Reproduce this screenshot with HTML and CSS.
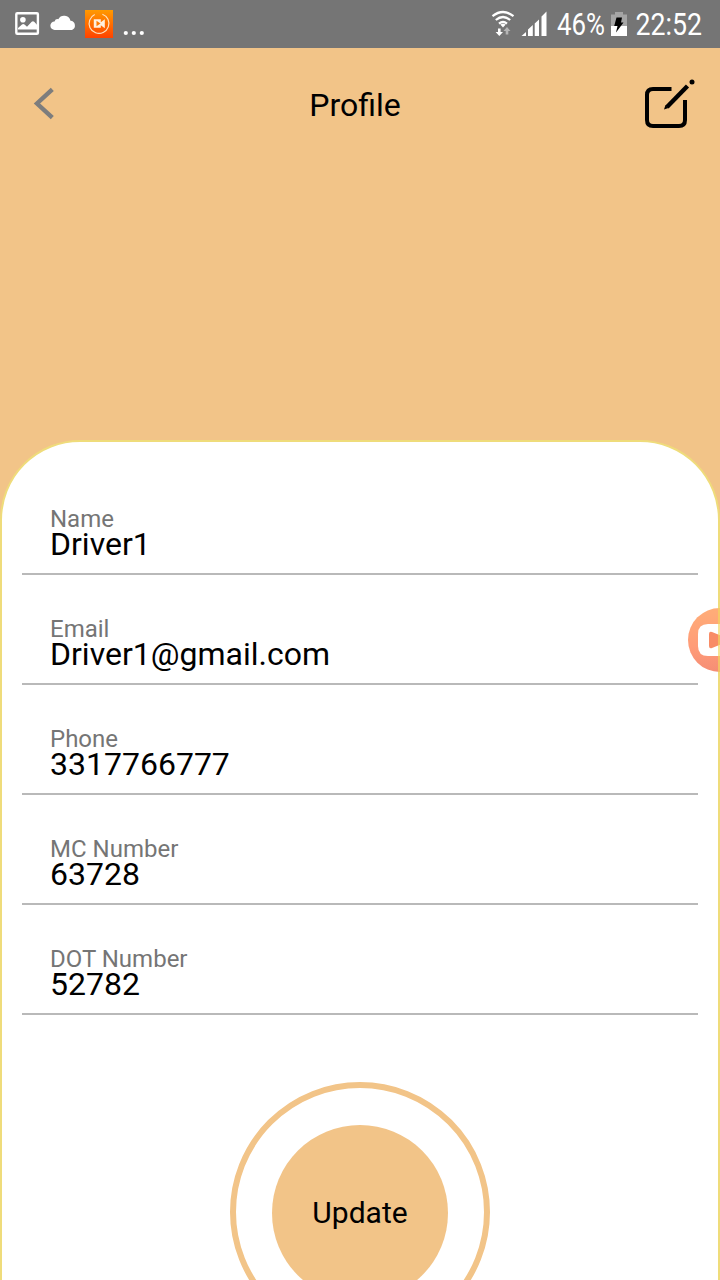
FILE: index.html
```html
<!DOCTYPE html>
<html lang="en">
<head>
<meta charset="utf-8">
<title>Profile</title>
<link rel="stylesheet" href="styles.css">
</head>
<body>
<div class="screen">
  <div class="status">
    <svg class="status-left" width="160" height="48" viewBox="0 0 160 48">
      <defs>
        <linearGradient id="rec" x1="0" y1="0" x2="0" y2="1"><stop offset="0" stop-color="#ff9a00"/><stop offset="1" stop-color="#ff4200"/></linearGradient>
      </defs>
      <rect x="16.300" y="13.300" width="21.600" height="20.400" rx="1" fill="none" stroke="#fff" stroke-width="2.400"/>
      <circle cx="22.900" cy="19.700" r="2.800" fill="#fff"/>
      <path d="M18 29.500v-1.500l4-3.500q1.300-.8 2.500 0l2.500 2.300 4.700-5q1.300-1 2.500 0l2.800 3v4.700z" fill="#fff"/>
      <path d="M54.800 30a4.300 4.300 0 0 1-.3-8.600q1-2.700 3.800-2.200a6.600 6.600 0 0 1 12.200 1.600 4.800 4.800 0 0 1 1.500 9.200z" fill="#fff"/>
      <rect x="85" y="10" width="28" height="28" fill="url(#rec)"/>
      <circle cx="99" cy="23.500" r="9.900" fill="none" stroke="#ffe2c0" stroke-width="1.200" stroke-dasharray="54 8" transform="rotate(-70 99 23.500)"/>
      <path d="M93.800 19.300h7v3l4-3v9l-4-3v2.500h-7z" fill="#fff0df"/>
      <path d="M96.500 20.800l4 2.700-4 2.800z" fill="#ff7900"/>
      <circle cx="125.800" cy="33" r="2.100" fill="#fff"/><circle cx="133.800" cy="33" r="2.100" fill="#fff"/><circle cx="141.800" cy="33" r="2.100" fill="#fff"/>
    </svg>
    <svg class="status-right" width="240" height="48" viewBox="480 0 240 48">
      <g fill="none" stroke="#fff" stroke-width="2.200">
        <path d="M492.500 16.200q10.500-8.400 21 0"/>
        <path d="M495.800 20q7.200-6 14.400 0"/>
        <path d="M499 23.700q4-3.400 8 0"/>
      </g>
      <path d="M500.300 24.600q2.700-1.500 5.400 0l-2.700 3z" fill="#fff"/>
      <path d="M498 28.500h2.600v3.500h2.400l-3.700 4-3.700-4h2.400z" fill="#fff"/>
      <path d="M505.700 34.500h2.600v-3.500h2.200l-3.500-4-3.500 4h2.200z" fill="#b5b5b5"/>
      <path d="M521.500 36l4.500-4v4zM528 36v-6.500l4.800-4.500v11zM534.700 36V23.500l4.300-4V36zM541.500 36V16.500l5-5V36z" fill="#fff"/>
      <text class="status-text" x="557" y="35" textLength="48" lengthAdjust="spacingAndGlyphs">46%</text>
      <path d="M611 14.500h4V12h8v2.500h4V26h-16z" fill="#a5a5a5"/>
      <path d="M611 26h16v10h-16z" fill="#fff"/>
      <path d="M616.500 17.500h5.500l-1 5h2.500L616 32.500l1.500-6.500h-3.300z" fill="#000"/>
      <text class="status-text" x="635.500" y="35" textLength="66.500" lengthAdjust="spacingAndGlyphs">22:52</text>
    </svg>
  </div>
  <header class="header">
    <svg width="56" height="56" viewBox="16 76 56 56"><path d="M52.300 89.300L37 103.500l15.300 14.200" fill="none" stroke="#7d7d7d" stroke-width="4.400"/></svg>
    <h1 class="title">Profile</h1>
    <svg width="56" height="56" viewBox="640 76 56 56">
      <path d="M671.500 89H653q-6 0-6 6v25q0 6 6 6h26q6 0 6-6v-20" fill="none" stroke="#000" stroke-width="4"/>
      <path d="M667 107l20.500-21" stroke="#000" stroke-width="4.400"/>
      <path d="M664 109.500l1.500-4.500 3 3z" fill="#000"/>
      <circle cx="692" cy="82" r="2.500" fill="#000"/>
    </svg>
  </header>
  <main class="card">
    <div class="field"><span class="label">Name</span><span class="value">Driver1</span></div>
    <div class="field"><span class="label">Email</span><span class="value">Driver1@gmail.com</span></div>
    <div class="field"><span class="label">Phone</span><span class="value">3317766777</span></div>
    <div class="field"><span class="label">MC Number</span><span class="value">63728</span></div>
    <div class="field"><span class="label">DOT Number</span><span class="value">52782</span></div>
    <div class="ring"><div class="update">Update</div></div>
  </main>
  <svg class="recorder" width="32" height="64" viewBox="0 0 32 64">
    <defs><linearGradient id="bubble" x1="0" y1="0" x2="0" y2="1"><stop offset="0" stop-color="#ffad78"/><stop offset=".6" stop-color="#ff9c78"/><stop offset="1" stop-color="#f58d75"/></linearGradient></defs>
    <circle cx="32" cy="32" r="32" fill="url(#bubble)"/>
    <path d="M36 16H20q-10 0-10 10v12q0 10 10 10h16z" fill="#fff"/>
    <path d="M21 26q0-3 3-2l12 5v6l-12 5q-3 1-3-2z" fill="#f88c66"/>
    <rect x="30" y="0" width="2" height="64" fill="#efd85c" opacity=".65"/>
  </svg>
</div>
</body>
</html>
```
FILE: styles.css
```css
body {
  margin: 0;
  font-family: Roboto, "Liberation Sans", sans-serif;
  color: #000;
}
.screen {
  position: relative;
  height: 1280px;
  overflow: hidden;
  background: #f2c488;
}
.status {
  display: flex;
  justify-content: space-between;
  height: 48px;
  background: #757575;
}
.status-text {
  font-size: 31px;
  fill: #fff;
}
.header {
  display: flex;
  align-items: center;
  justify-content: space-between;
  box-sizing: border-box;
  height: 112px;
  padding: 0 24px 0 16px;
}
.title {
  margin: 0;
  padding: 2px 2px 0 0;
  font-size: 32px;
  font-weight: 400;
  line-height: 38px;
}
.card {
  box-sizing: border-box;
  height: 1000px;
  margin-top: 280px;
  padding: 23px 20px 0;
  border: 2px solid #efdc7b;
  border-radius: 80px 80px 0 0;
  background: #fff;
}
.field {
  display: flex;
  flex-direction: column;
  justify-content: flex-end;
  box-sizing: border-box;
  height: 110px;
  padding: 0 28px 16px;
  border-bottom: 2px solid #b9b9b9;
}
.label {
  font-size: 24px;
  line-height: 24px;
  color: #757575;
}
.value {
  font-size: 32px;
  line-height: 26px;
}
.ring {
  display: flex;
  align-items: center;
  justify-content: center;
  box-sizing: border-box;
  width: 260px;
  height: 260px;
  margin: 67px auto 0;
  border: 6px solid #f2c488;
  border-radius: 50%;
}
.update {
  width: 176px;
  height: 176px;
  margin-top: 1px;
  border-radius: 50%;
  background: #f2c488;
  font-size: 30px;
  line-height: 175px;
  text-align: center;
}
.recorder {
  position: absolute;
  right: 0;
  top: 608px;
}
```
